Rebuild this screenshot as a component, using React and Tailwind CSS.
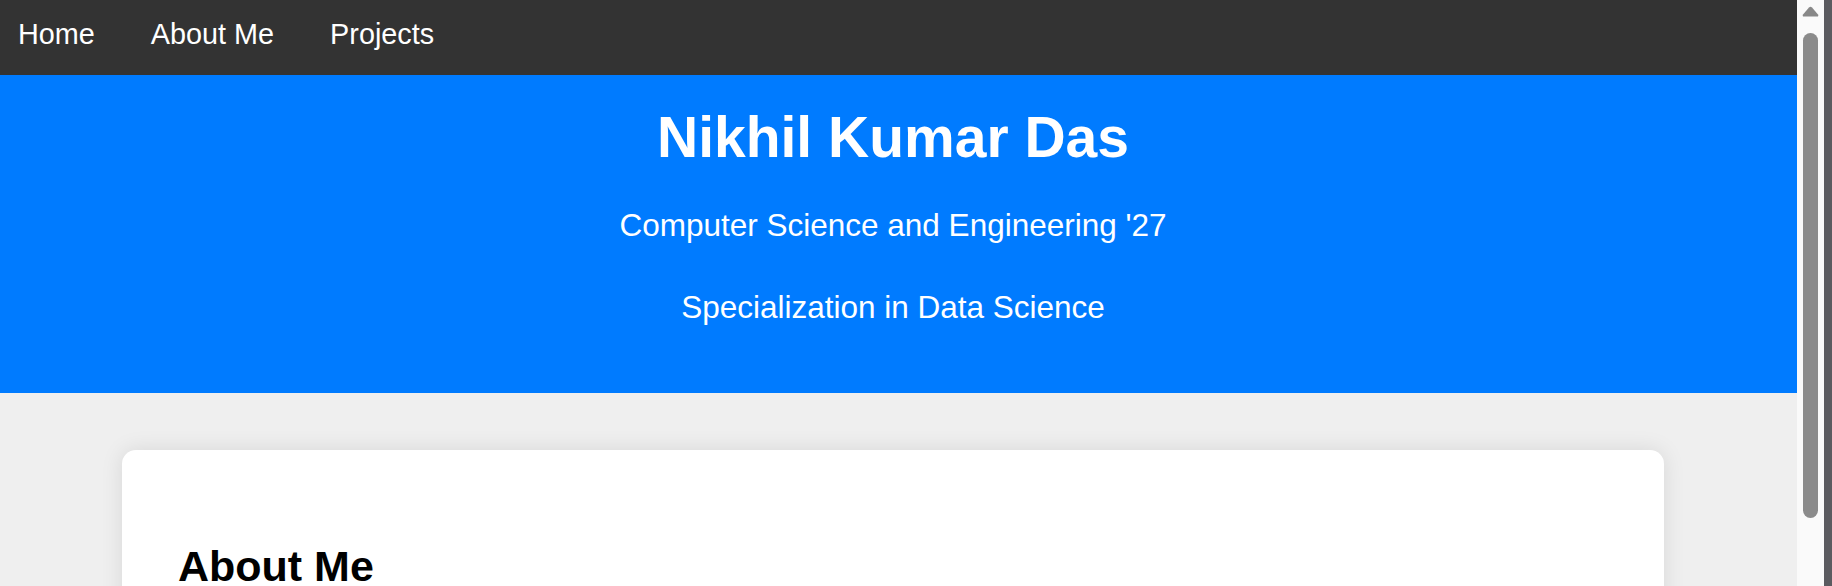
export default function App() {
  const links = ["Home", "About Me", "Projects"];

  return (
    <div className="flex h-[586px] w-[1832px] overflow-hidden font-['Liberation_Sans',Arial,sans-serif]">
      <div className="flex w-[1797px] flex-col overflow-hidden bg-[#efefef]">
        <nav className="flex h-[75px] shrink-0 gap-[56px] bg-[#333333] px-[18px] pt-[18px]">
          {links.map((l) => (
            <a key={l} href="#" className="text-[28.8px] leading-[32px] text-white">
              {l}
            </a>
          ))}
        </nav>

        <header className="shrink-0 bg-[#007bff] pr-[11px] pt-[30px] pb-[68px] text-center text-white">
          <h1 className="text-[57px] font-bold leading-[64px]">Nikhil Kumar Das</h1>
          <p className="mt-[38px] text-[31.5px] leading-[36px]">
            Computer Science and Engineering '27
          </p>
          <p className="mt-[46px] text-[31.5px] leading-[36px]">
            Specialization in Data Science
          </p>
        </header>

        <main className="pl-[122px] pr-[133px] pt-[57px]">
          <section className="h-[300px] rounded-[14px] bg-white px-[56px] pt-[92px] shadow-[0_0_22px_rgba(0,0,0,0.1)]">
            <h2 className="text-[43px] font-bold leading-[48px] text-black">About Me</h2>
          </section>
        </main>
      </div>

      {/* scrollbar */}
      <div className="flex w-[27px] shrink-0 flex-col items-center bg-[#fafafa]">
        <svg className="mt-[6px]" width="17" height="11" viewBox="0 0 17 11">
          <path
            d="M7 1.5 Q8.5 0 10 1.5 L16 8.5 Q17 10.5 15 10.5 L2 10.5 Q0 10.5 1 8.5 Z"
            fill="#888888"
          />
        </svg>
        <div className="mt-[16px] h-[485px] w-[15px] rounded-full bg-[#8b8b8b]" />
      </div>
      <div className="w-[8px] shrink-0 bg-[#5b5b60]" />
    </div>
  );
}
